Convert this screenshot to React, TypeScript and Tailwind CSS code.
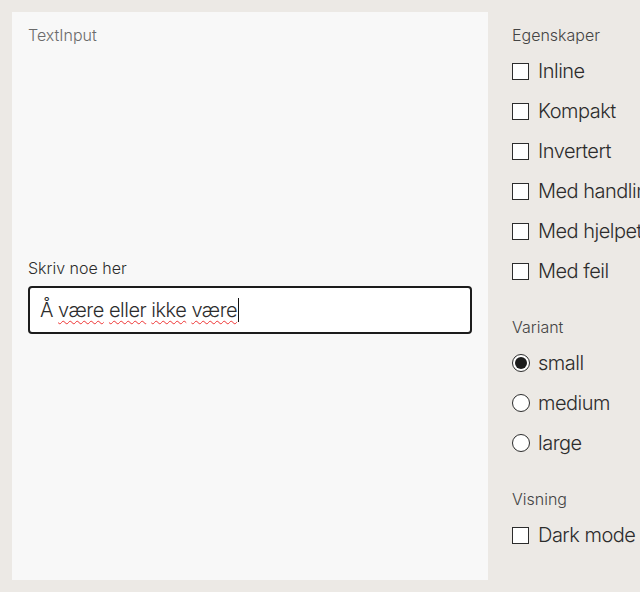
import { useState } from 'react';

const props = ['Inline', 'Kompakt', 'Invertert', 'Med handling', 'Med hjelpetekst', 'Med feil'];
const variants = ['small', 'medium', 'large'];

function Checkbox({ label, checked, onChange }: { label: string; checked: boolean; onChange: () => void }) {
  return (
    <label className="flex items-center h-10 cursor-pointer whitespace-nowrap" onClick={onChange}>
      <span className="w-[17px] h-[17px] border border-[#2c2c2c] bg-white shrink-0 flex items-center justify-center">
        {checked && <span className="w-[9px] h-[9px] bg-[#2c2c2c]" />}
      </span>
      <span className="ml-[9px] text-[20px] font-light tracking-tight text-[#2c2c2c]">{label}</span>
    </label>
  );
}

function Radio({ label, checked, onChange }: { label: string; checked: boolean; onChange: () => void }) {
  return (
    <label className="flex items-center h-10 cursor-pointer whitespace-nowrap" onClick={onChange}>
      <span className="w-[18px] h-[18px] rounded-full border border-[#2c2c2c] bg-white shrink-0 flex items-center justify-center">
        {checked && <span className="w-[12px] h-[12px] rounded-full bg-[#1c1c1c]" />}
      </span>
      <span className="ml-[8px] text-[20px] font-light tracking-tight text-[#2c2c2c]">{label}</span>
    </label>
  );
}

export default function App() {
  const [checked, setChecked] = useState<Record<string, boolean>>({});
  const [variant, setVariant] = useState('small');
  const [dark, setDark] = useState(false);
  const words = ['være', 'eller', 'ikke', 'være'];

  return (
    <div
      className="w-[640px] h-[592px] bg-[#ece9e5] flex overflow-hidden"
      style={{ fontFamily: 'Inter, "Liberation Sans", sans-serif' }}
    >
      <div className="ml-3 mt-3 w-[476px] h-[568px] shrink-0 bg-[#f8f8f8] px-4 pt-[14px] flex flex-col">
        <div className="text-[16px] font-light text-[#6b6b6b] leading-[18px]">TextInput</div>
        <div className="flex-1 flex flex-col justify-center pb-[32px]">
          <div className="text-[16px] font-light text-[#2c2c2c] leading-5 mb-[8px]">Skriv noe her</div>
          <div className="h-12 border-2 border-[#1c1c1c] rounded-[4px] bg-white flex items-center px-[10px] text-[20px] font-light tracking-tight text-[#2c2c2c]">
            <span>Å</span>
            {words.map((w, i) => (
              <span key={i} className="flex">
                <span>&nbsp;</span>
                <span className="underline decoration-wavy decoration-[#e33] decoration-1 underline-offset-[3px]">{w}</span>
              </span>
            ))}
            <span className="w-px h-6 bg-[#111] ml-px" />
          </div>
        </div>
      </div>
      <div className="ml-6 pt-[25px] flex flex-col shrink-0">
        <div className="text-[16px] font-light text-[#444] leading-5 mb-[6px]">Egenskaper</div>
        {props.map((p) => (
          <Checkbox key={p} label={p} checked={!!checked[p]} onChange={() => setChecked((c) => ({ ...c, [p]: !c[p] }))} />
        ))}
        <div className="text-[16px] font-light text-[#444] leading-5 mt-[26px] mb-[6px]">Variant</div>
        {variants.map((v) => (
          <Radio key={v} label={v} checked={variant === v} onChange={() => setVariant(v)} />
        ))}
        <div className="text-[16px] font-light text-[#444] leading-5 mt-[26px] mb-[6px]">Visning</div>
        <Checkbox label="Dark mode" checked={dark} onChange={() => setDark((d) => !d)} />
      </div>
    </div>
  );
}
